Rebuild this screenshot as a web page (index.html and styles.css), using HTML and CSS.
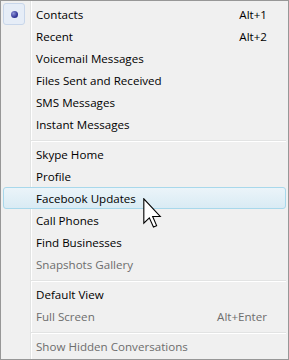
FILE: index.html
```html
<!DOCTYPE html>
<html>
<head>
<meta charset="utf-8">
<link rel="stylesheet" href="styles.css">
</head>
<body>
<div class="menu">
  <div class="item checked"><span class="check"><span class="dot"></span></span><span class="label">Contacts</span><span class="key">Alt+1</span></div>
  <div class="item"><span class="label">Recent</span><span class="key">Alt+2</span></div>
  <div class="item"><span class="label">Voicemail Messages</span></div>
  <div class="item"><span class="label">Files Sent and Received</span></div>
  <div class="item"><span class="label">SMS Messages</span></div>
  <div class="item"><span class="label">Instant Messages</span></div>
  <div class="sep"></div>
  <div class="item"><span class="label">Skype Home</span></div>
  <div class="item"><span class="label">Profile</span></div>
  <div class="item hover"><span class="label">Facebook Updates</span></div>
  <div class="item"><span class="label">Call Phones</span></div>
  <div class="item"><span class="label">Find Businesses</span></div>
  <div class="item disabled"><span class="label">Snapshots Gallery</span></div>
  <div class="sep"></div>
  <div class="item"><span class="label">Default View</span></div>
  <div class="item disabled"><span class="label">Full Screen</span><span class="key">Alt+Enter</span></div>
  <div class="sep"></div>
  <div class="item disabled"><span class="label">Show Hidden Conversations</span></div>
  <svg class="cursor" width="19" height="30" viewBox="0 0 12 19"><path d="M0.5 0.5 L0.5 16 L4 12.6 L6.6 18.4 L8.6 17.5 L6.1 11.7 L10.9 11.7 Z" fill="#fff" stroke="#000" stroke-width="0.7" stroke-linejoin="miter"/></svg>
</div>
</body>
</html>
```
FILE: styles.css
```css
html, body { margin: 0; padding: 0; }
body { background: #f0f0f0; }
.menu {
  position: relative;
  box-sizing: border-box;
  width: 289px;
  height: 360px;
  border: 1px solid #979797;
  padding: 2px;
  background: linear-gradient(to right, transparent 29px, #e2e3e3 29px, #e2e3e3 30px, #fff 30px, #fff 31px, transparent 31px), #f0f0f0;
  font-family: "Open Sans", "Noto Sans", sans-serif;
  font-size: 11.6px;
  color: #000;
}
.item {
  position: relative;
  box-sizing: border-box;
  height: 22px;
  display: flex;
  align-items: center;
  padding: 0 18px 0 32px;
  border: 1px solid transparent;
  border-radius: 3px;
}
.label { flex: 1; white-space: nowrap; }
.key { white-space: nowrap; }
.disabled { color: #6d6d6d; }
.hover {
  border-color: #a8d8eb;
  background: linear-gradient(to bottom, #ebf4f9, #d9ebf4);
}
.check {
  position: absolute;
  left: -1px;
  top: -1px;
  box-sizing: border-box;
  width: 22px;
  height: 22px;
  border: 1px solid #c8d6ea;
  border-radius: 3px;
  background: #e6edf7;
  display: flex;
  align-items: center;
  justify-content: center;
}
.dot {
  width: 7px;
  height: 7px;
  border-radius: 50%;
  background: radial-gradient(circle at 35% 35%, #8f95d8, #34389a 60%, #23267a);
}
.sep {
  height: 8px;
  margin-left: 28px;
  box-sizing: border-box;
  padding-top: 5px;
}
.sep::before {
  content: "";
  display: block;
  height: 1px;
  background: #e2e3e3;
  border-bottom: 1px solid #fff;
}
.cursor {
  position: absolute;
  left: 142px;
  top: 197px;
}
```
